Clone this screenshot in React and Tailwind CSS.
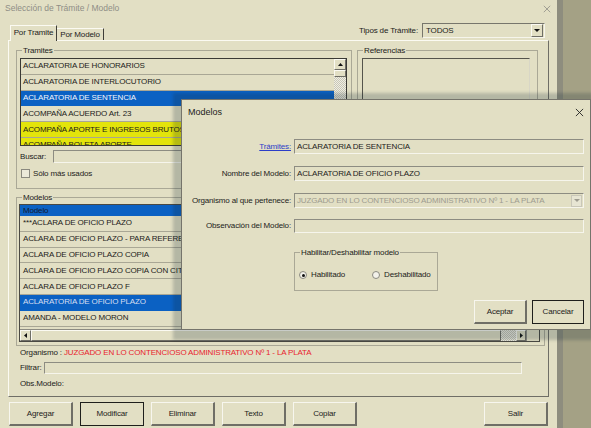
import React from "react";

const SUNK =
  "border-t border-l border-b border-r border-t-[#8d8c82] border-l-[#8d8c82] border-b-[#f6f5ec] border-r-[#f6f5ec] bg-[#e2dfc4]";
const RAISED =
  "border-t border-l border-b border-r border-t-[#fbfaf2] border-l-[#fbfaf2] border-b-[#6f6e66] border-r-[#6f6e66] bg-[#e2dfc4]";
const CHECKER =
  "bg-[repeating-conic-gradient(#c9c7b6_0_25%,#efeee4_0_50%)] bg-[length:2px_2px]";

function Tri({ dir = "down", color = "#111" }) {
  if (dir === "up")
    return (
      <svg width="5" height="3" viewBox="0 0 5 3">
        <polygon points="0,3 2.5,0 5,3" fill={color} />
      </svg>
    );
  if (dir === "down")
    return (
      <svg width="6" height="3" viewBox="0 0 6 3">
        <polygon points="0,0 6,0 3,3" fill={color} />
      </svg>
    );
  if (dir === "left")
    return (
      <svg width="3" height="5" viewBox="0 0 3 5">
        <polygon points="3,0 3,5 0,2.5" fill={color} />
      </svg>
    );
  return (
    <svg width="3" height="5" viewBox="0 0 3 5">
      <polygon points="0,0 0,5 3,2.5" fill={color} />
    </svg>
  );
}

function XIcon({ size = 8, color = "#333", sw = 1 }) {
  return (
    <svg width={size} height={size} viewBox="0 0 10 10">
      <path d="M1 1 L9 9 M9 1 L1 9" stroke={color} strokeWidth={sw} fill="none" />
    </svg>
  );
}

function Group({ label, className, children }) {
  return (
    <div className={"relative border border-[#aaa896] " + className}>
      <span className="absolute -top-[5px] left-[5px] px-[1px] bg-[#e2dfc4] leading-[9px]">
        {label}
      </span>
      {children}
    </div>
  );
}

function Btn({ children, def, className = "" }) {
  return (
    <div
      className={
        "h-[24px] flex items-center justify-center " +
        (def
          ? "border border-[#1f1f1c] bg-[#e2dfc4] "
          : "border-t border-l border-b-2 border-r-2 border-t-[#f7f6ee] border-l-[#f7f6ee] border-b-[#6f6e66] border-r-[#6f6e66] bg-[#e2dfc4] ") +
        className
      }
    >
      {children}
    </div>
  );
}

const tramites = [
  { t: "ACLARATORIA DE HONORARIOS" },
  { t: "ACLARATORIA DE INTERLOCUTORIO" },
  { t: "ACLARATORIA DE SENTENCIA", sel: true },
  { t: "ACOMPAÑA ACUERDO Art. 23" },
  { t: "ACOMPAÑA APORTE E INGRESOS BRUTOS", y: true },
  { t: "ACOMPAÑA BOLETA APORTE", y: true },
];

const modelos = [
  { t: "***ACLARA DE OFICIO PLAZO" },
  { t: "ACLARA DE OFICIO PLAZO - PARA REFERENCIAS" },
  { t: "ACLARA DE OFICIO PLAZO COPIA" },
  { t: "ACLARA DE OFICIO PLAZO COPIA CON CITACION" },
  { t: "ACLARA DE OFICIO PLAZO F" },
  { t: "ACLARATORIA DE OFICIO PLAZO", sel: true },
  { t: "AMANDA - MODELO MORON" },
];

function MainWindow() {
  return (
    <div className="w-[557px] h-full bg-[#e2dfc4] flex flex-col shrink-0">
      <div className="h-[17px] flex items-center justify-between pl-[5px] pr-[6px]">
        <span className="text-[8.5px] tracking-normal text-[#8f8e86]">
          Selección de Trámite / Modelo
        </span>
        <XIcon size={8} color="#8f8e86" />
      </div>

      <div className="h-[24px] -mb-px flex items-end justify-between">
        <div className="flex items-end ml-[10px]">
          <div className="relative z-10 h-[16px] w-[47px] pb-[1px] bg-[#e2dfc4] border-t border-l border-r border-t-[#fbfaf2] border-l-[#fbfaf2] border-r-[#3f3e38] flex items-center justify-center">
            Por Tramite
          </div>
          <div className="h-[12px] w-[47px] mb-px border-t border-r border-t-[#fbfaf2] border-r-[#3f3e38] flex items-center justify-center">
            Por Modelo
          </div>
        </div>
        <div className="flex items-center mb-[3px] mr-[12px]">
          <span className="mr-[4px]">Tipos de Trámite:</span>
          <div className="h-[15px] w-[123px] border-t border-l border-b border-r border-t-[#77766c] border-l-[#77766c] border-b-[#f6f5ec] border-r-[#f6f5ec] flex items-center">
            <span className="flex-1 pl-[3px]">TODOS</span>
            <div className={"w-[12px] h-[13px] mr-px flex items-center justify-center " + RAISED}>
              <Tri dir="down" />
            </div>
          </div>
        </div>
      </div>

      <div className="ml-[8px] w-[541px] h-[357px] border-t border-l border-b border-r border-t-[#fbfaf2] border-l-[#fbfaf2] border-b-[#6f6e66] border-r-[#6f6e66] pl-[7px] pt-[9px] flex flex-col items-start">
        <div className="flex items-start">
          <Group label="Tramites" className="w-[336px] h-[139px] pl-[3px] pt-[7px]">
            <div className="w-[327px] h-[88px] border border-[#3b3a35] flex overflow-hidden">
              <div className="flex-1 flex flex-col overflow-hidden">
                {tramites.map((r, i) => (
                  <div
                    key={i}
                    className={
                      "h-[15.8px] shrink-0 flex items-center pl-[2px] whitespace-nowrap border-b " +
                      (r.sel
                        ? "bg-[#0b61c3] text-[#f2f5fb] border-[#0b61c3]"
                        : r.y
                        ? "bg-[#e3e40b] border-[#a9a78f]"
                        : "border-[#a9a795]")
                    }
                  >
                    {r.t}
                  </div>
                ))}
              </div>
              <div className={"w-[12px] flex flex-col " + CHECKER}>
                <div className={"h-[11px] flex items-center justify-center " + RAISED}>
                  <Tri dir="up" />
                </div>
                <div className={"h-[7px] " + RAISED} />
              </div>
            </div>
            <div className="mt-[4px] flex items-center">
              <span className="w-[33px]">Buscar:</span>
              <div className={"h-[13px] w-[294px] " + SUNK} />
            </div>
            <div className="mt-[6px] flex items-center ml-px">
              <div className="w-[9px] h-[9px] border border-[#8a897f] bg-[#ebe9d9]" />
              <span className="ml-[3px]">Sólo más usados</span>
            </div>
          </Group>
          <Group label="Referencias" className="ml-[5px] w-[181px] h-[139px] pl-[4px] pt-[7px]">
            <div className="w-[168px] h-[89px] border-t border-l border-b border-r border-t-[#55544c] border-l-[#55544c] border-b-[#d8d6c6] border-r-[#d8d6c6]" />
          </Group>
        </div>

        <Group label="Modelos" className="mt-[8px] w-[529px] h-[149px] pl-[2px] pt-[6px]">
          <div className="w-[521px] h-[138px] border border-[#4a4943] flex flex-col">
            <div className="flex-1 flex overflow-hidden">
              <div className="flex-1 flex flex-col overflow-hidden">
                <div className="h-[11px] shrink-0 bg-[#0b61c3] text-[#141a2c] flex items-center pl-[3px]">
                  Modelo
                </div>
                {modelos.map((r, i) => (
                  <div
                    key={i}
                    className={
                      "h-[15.8px] shrink-0 flex items-center pl-[3px] whitespace-nowrap border-b " +
                      (r.sel
                        ? "bg-[#0b61c3] text-[#d6def0] border-[#0b61c3]"
                        : "border-[#a9a795]")
                    }
                  >
                    {r.t}
                  </div>
                ))}
              </div>
              <div className={"w-[13px] flex flex-col " + CHECKER}>
                <div className={"h-[12px] flex items-center justify-center " + RAISED}>
                  <Tri dir="up" />
                </div>
              </div>
            </div>
            <div className="h-[12px] flex border-t border-[#8d8c82]">
              <div className={"w-[11px] flex items-center justify-center " + RAISED}>
                <Tri dir="left" />
              </div>
              <div className={"flex-1 " + RAISED} />
              <div className={"w-[15px] " + CHECKER} />
              <div className={"w-[10px] flex items-center justify-center " + RAISED}>
                <Tri dir="right" />
              </div>
              <div className="w-[13px] border-l border-[#8d8c82] bg-[#e2dfc4]" />
            </div>
          </div>
        </Group>

        <div className="mt-[1px] ml-[4px] leading-[12px] whitespace-nowrap">
          Organismo : <span className="text-[#e8232d]">JUZGADO EN LO CONTENCIOSO ADMINISTRATIVO Nº 1 - LA PLATA</span>
        </div>
        <div className="mt-[3px] ml-[4px] flex items-center">
          <span className="w-[24px]">Filtrar:</span>
          <div className={"h-[12px] w-[478px] " + SUNK} />
        </div>
        <div className="mt-[4px] ml-[4px] leading-[12px]">Obs.Modelo:</div>
      </div>

      <div className="mt-[5px] flex pl-[9px] pr-[9px] gap-[7px]">
        <Btn className="w-[64px]">Agregar</Btn>
        <Btn className="w-[64px]" def>
          Modificar
        </Btn>
        <Btn className="w-[64px]">Eliminar</Btn>
        <Btn className="w-[64px]">Texto</Btn>
        <Btn className="w-[64px]">Copiar</Btn>
        <Btn className="w-[64px] ml-auto">Salir</Btn>
      </div>
    </div>
  );
}

function FormRow({ label, children, className = "" }) {
  return (
    <div className={"flex items-center " + className}>
      <div className="w-[112px] pr-[3px] text-right whitespace-nowrap">{label}</div>
      {children}
    </div>
  );
}

function Radio({ checked, label, className = "" }) {
  return (
    <div className={"flex items-center " + className}>
      <div className="w-[8px] h-[8px] rounded-full border border-[#8b8a80] bg-[#f3f2ea] flex items-center justify-center">
        {checked && <div className="w-[3px] h-[3px] rounded-full bg-[#111]" />}
      </div>
      <span className="ml-[4px]">{label}</span>
    </div>
  );
}

function Modal() {
  return (
    <div className="absolute left-[181px] top-[99px] w-[410px] h-[231px] bg-[#e2dfc4] border border-[#75746b] shadow-[0_2px_3px_8px_rgba(20,40,50,0.22)] flex flex-col">
      <div className="h-[24px] shrink-0 flex items-center justify-between pl-[6px] pr-[6px]">
        <span className="text-[9px] tracking-normal">Modelos</span>
        <XIcon size={9} color="#222" />
      </div>
      <FormRow className="mt-[15px]" label={<span className="text-[#2c3ec8] underline">Trámites:</span>}>
        <div className={"h-[15px] w-[290px] flex items-center pl-[2px] " + SUNK}>
          ACLARATORIA DE SENTENCIA
        </div>
      </FormRow>
      <FormRow className="mt-[12px]" label="Nombre del Modelo:">
        <div className={"h-[15px] w-[290px] flex items-center pl-[2px] " + SUNK}>
          ACLARATORIA DE OFICIO PLAZO
        </div>
      </FormRow>
      <FormRow className="mt-[12px]" label="Organismo al que pertenece:">
        <div className={"h-[15px] w-[290px] flex items-center pl-[2px] " + SUNK}>
          <span className="flex-1 text-[#9d9b8f] whitespace-nowrap">
            JUZGADO EN LO CONTENCIOSO ADMINISTRATIVO Nº 1 - LA PLATA
          </span>
          <div className="w-[11px] h-[12px] mr-px border border-[#c9c7b8] bg-[#e7e5d3] flex items-center justify-center">
            <Tri dir="down" color="#9d9b8f" />
          </div>
        </div>
      </FormRow>
      <FormRow className="mt-[11px]" label="Observación del Modelo:">
        <div className={"h-[14px] w-[290px] " + SUNK} />
      </FormRow>
      <Group label="Habilitar/Deshabilitar modelo" className="mt-[19px] ml-[112px] w-[144px] h-[39px] flex items-center pl-[4px] pt-[7px]">
        <Radio checked label="Habilitado" />
        <Radio label="Deshabilitado" className="ml-[27px]" />
      </Group>
      <div className="mt-[9px] flex justify-end pr-[6px] gap-[5px]">
        <Btn className="w-[53px]">Aceptar</Btn>
        <Btn className="w-[52px]" def>
          Cancelar
        </Btn>
      </div>
    </div>
  );
}

export default function App() {
  return (
    <div className="relative flex w-[591px] h-[428px] overflow-hidden bg-[#a4a185] font-['Liberation_Sans',Arial,sans-serif] text-[8px] tracking-[-0.15px] text-[#1c1c1a] leading-none">
      <MainWindow />
      <div className="w-[6px] h-full shrink-0 bg-[#8e8d7e]" />
      <Modal />
    </div>
  );
}
